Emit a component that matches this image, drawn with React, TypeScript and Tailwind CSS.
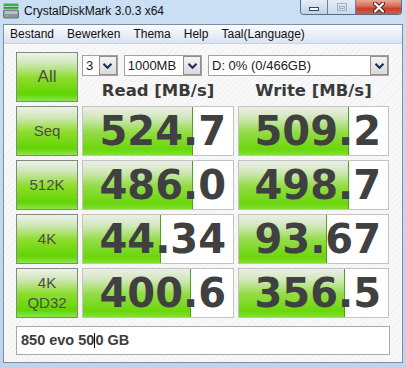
import { ReactNode } from 'react'

type Row = { label: ReactNode; read: string; write: string; readFill: number; writeFill: number }

const rows: Row[] = [
  { label: <span className="text-[15px]">Seq</span>, read: '524.7', write: '509.2', readFill: 110, writeFill: 110 },
  { label: <span className="text-[15px]">512K</span>, read: '486.0', write: '498.7', readFill: 110, writeFill: 110 },
  { label: <span className="text-[15px]">4K</span>, read: '44.34', write: '93.67', readFill: 78, writeFill: 88 },
  {
    label: (
      <span className="flex flex-col items-center text-[15px] leading-[20px]">
        <span>4K</span>
        <span>QD32</span>
      </span>
    ),
    read: '400.6', write: '356.5', readFill: 108, writeFill: 106,
  },
]

const sans = "font-['Liberation_Sans',Arial,sans-serif]"
const verdana = "font-['DejaVu_Sans',Verdana,sans-serif]"

function DriveIcon() {
  return (
    <svg width="16" height="16" viewBox="0 0 16 16">
      <rect x="0.5" y="0.5" width="15" height="2.5" fill="#3cb43c" />
      <rect x="0.5" y="3.8" width="15" height="2" fill="#2f9a2f" />
      <rect x="0.5" y="7" width="15" height="8" rx="1" fill="#8c969c" stroke="#5a6268" strokeWidth="0.8" />
      <rect x="1.5" y="8" width="13" height="3" fill="#b8c0c4" />
      <rect x="2.5" y="12" width="3" height="1.5" fill="#5ddc3a" />
    </svg>
  )
}

function Chevron() {
  return (
    <svg width="11" height="8" viewBox="0 0 11 8">
      <path d="M1.5 1.8 L5.5 5.8 L9.5 1.8" fill="none" stroke="#1c2c58" strokeWidth="2" />
    </svg>
  )
}

function Combo({ value, width }: { value: string; width: string }) {
  return (
    <div className={`${width} h-[21px] flex items-center border border-[#a2a2a2] bg-white`}>
      <span className={`${sans} text-[13px] text-[#202020] pl-[3px] flex-1 leading-none`}>{value}</span>
      <span className="h-[19px] w-[18px] flex items-center justify-center border border-[#8f8f8f] bg-[linear-gradient(to_bottom,#f4f4f4,#dadada)]">
        <Chevron />
      </span>
    </div>
  )
}

function TestButton({ children }: { children: ReactNode }) {
  return (
    <div className={`h-[50px] flex items-center justify-center border border-[#7f8c7d] bg-[linear-gradient(to_bottom,#eef1eb_0%,#cfe6b6_22%,#8ddd2c_52%,#62d502_86%,#8de44f_100%)] ${sans} text-[#4c4c4c]`}>
      {children}
    </div>
  )
}

function ValueBox({ value, fill }: { value: string; fill: number }) {
  return (
    <div className="relative h-[50px] border border-[#c3c3c3] bg-white overflow-hidden">
      <div
        className="absolute left-0 top-0 bottom-0 border-r border-[#4f9f22] bg-[linear-gradient(to_bottom,#eceee8_0%,#d2e8bc_22%,#94dc48_52%,#6bd70a_88%,#82de34_100%)]"
        style={{ width: fill }}
      />
      <div className={`relative h-full flex items-center justify-end pr-[7px] ${verdana} font-bold text-[40px] leading-none text-[#404040]`}>
        {value}
      </div>
    </div>
  )
}

export default function App() {
  return (
    <div className="w-[406px] h-[368px] flex flex-col overflow-hidden bg-[linear-gradient(to_bottom,#cadff3,#bdd4ec)]">
      {/* title bar */}
      <div className="h-[24px] flex items-start shrink-0">
        <span className="ml-[3px] mt-[3px]"><DriveIcon /></span>
        <span className={`${sans} text-[12px] text-[#101010] ml-[5px] mt-[4px] leading-[14px]`}>CrystalDiskMark 3.0.3 x64</span>
        <div className="ml-auto mr-[4px] flex h-[15px] border border-t-0 border-[#5c6b80] rounded-b-[4px] overflow-hidden">
          <div className="w-[27px] flex items-center justify-center border-r border-[#6e7f94] bg-[linear-gradient(to_bottom,#e4edf7,#bfd2e8)]">
            <span className="mt-[3px] w-[10px] h-[4px] bg-white border border-[#38455a]" />
          </div>
          <div className="w-[28px] flex items-center justify-center border-r border-[#6e7f94] bg-[linear-gradient(to_bottom,#e4edf7,#c8d9ec)]">
            <span className="w-[10px] h-[8px] border border-[#9fb0c4] flex items-center justify-center">
              <span className="w-[6px] h-[3px] border border-[#9fb0c4]" />
            </span>
          </div>
          <div className="w-[45px] flex items-center justify-center bg-[linear-gradient(to_bottom,#e8a898_0%,#d66a58_45%,#c7402c_60%,#d45a46_100%)]">
            <svg width="14" height="11" viewBox="0 0 14 11">
              <path d="M3 1.5 L11 9.5 M11 1.5 L3 9.5" stroke="#4a1e18" strokeWidth="4" strokeLinecap="round" />
              <path d="M3 1.5 L11 9.5 M11 1.5 L3 9.5" stroke="#ffffff" strokeWidth="2.2" strokeLinecap="round" />
            </svg>
          </div>
        </div>
      </div>

      {/* client */}
      <div className="mx-[3px] mb-[5px] flex-1 flex flex-col border border-[#7d8ea2]">
        <div className={`h-[19px] flex items-center gap-[13px] pl-[6px] ${sans} text-[12px] text-[#101010] bg-[linear-gradient(to_bottom,#fbfcfe,#e7edf6_60%,#dbe4f1)] border-b border-[#c9d5e5]`}>
          <span>Bestand</span>
          <span>Bewerken</span>
          <span>Thema</span>
          <span>Help</span>
          <span>Taal(Language)</span>
        </div>

        <div className="flex-1 pl-[12px] pt-[8px] bg-[repeating-linear-gradient(135deg,#f8f8f8_0px,#f8f8f8_3px,#f1f1f1_3px,#f1f1f1_4px)]">
          <div className="grid grid-cols-[62px_152px_151px] gap-[4px] auto-rows-[50px]">
            <TestButton><span className="text-[17px]">All</span></TestButton>
            <div className="col-span-2 flex flex-col">
              <div className="mt-[3px] flex gap-[6px]">
                <Combo value="3" width="w-[36px]" />
                <Combo value="1000MB" width="w-[79px]" />
                <Combo value="D: 0% (0/466GB)" width="w-[181px] shrink-0" />
              </div>
              <div className={`mt-[4px] flex ${verdana} font-bold text-[16.5px] leading-[22px] text-[#3a3a3a]`}>
                <span className="w-[152px] text-center">Read [MB/s]</span>
                <span className="w-[4px]" />
                <span className="w-[151px] text-center">Write [MB/s]</span>
              </div>
            </div>

            {rows.map((r, i) => (
              <div key={i} className="contents">
                <TestButton>{r.label}</TestButton>
                <ValueBox value={r.read} fill={r.readFill} />
                <ValueBox value={r.write} fill={r.writeFill} />
              </div>
            ))}
          </div>

          <div className="mt-[8px] w-[374px] h-[29px] flex items-center border border-[#a9a9a9] bg-white pl-[4px]">
            <span className={`${sans} font-bold text-[14.5px] text-[#3c3c3c] leading-none flex items-center`}>
              850 evo 50<span className="w-[1px] h-[15px] bg-black" />0 GB
            </span>
          </div>
        </div>
      </div>
    </div>
  )
}
